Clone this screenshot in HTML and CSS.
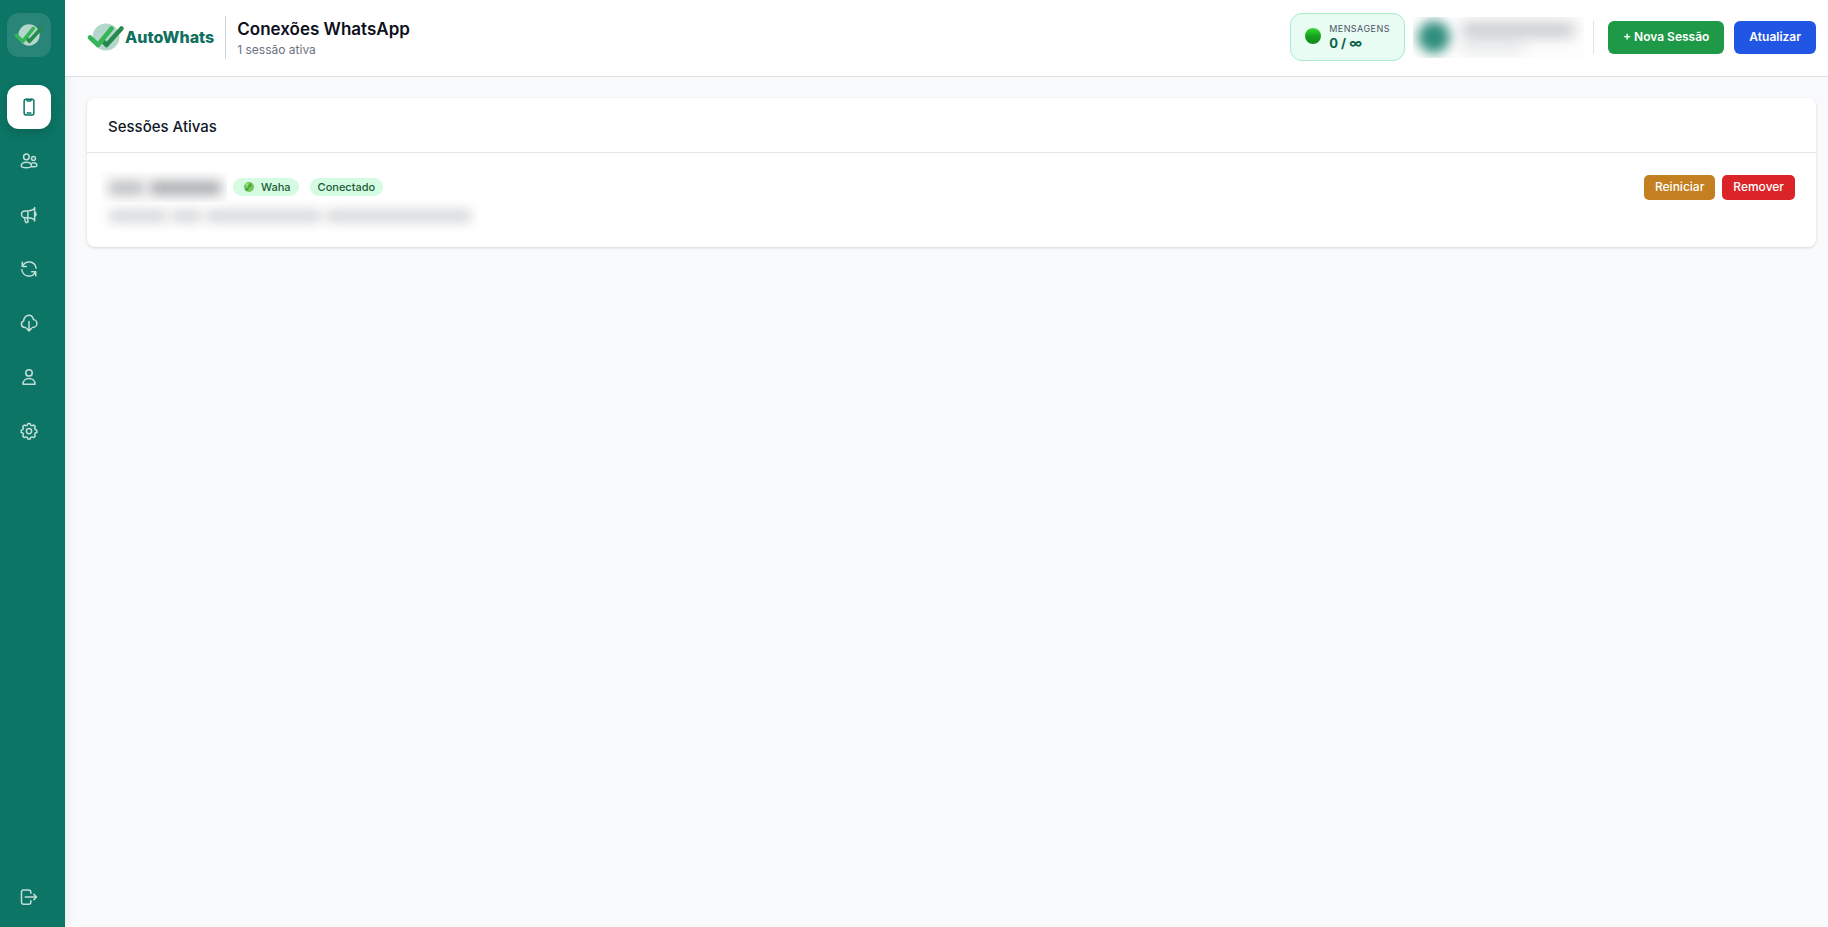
FILE: index.html
```html
<!doctype html>
<html lang="pt-BR">
<head>
    <meta charset="UTF-8">
    <title>AutoWhats</title>
    <link rel="stylesheet" href="styles.css">
</head>
<body>
    <svg class="defs" aria-hidden="true">
        <symbol id="logo" viewBox="0 0 38 30">
            <circle cx="19" cy="15" r="13.500" fill="#b4d6cb"/>
            <path d="M16 19l3.500 4L34.500 6.500" stroke="#268a4e"/>
            <path d="M3 15.500l8 7.500L24.500 6.500" stroke="#35b558"/>
        </symbol>
    </svg>

    <aside class="sidebar">
        <a class="brand" href="#" aria-label="AutoWhats">
            <svg class="logo-mark small"><use href="#logo"/></svg>
        </a>
        <nav class="nav">
            <a class="nav-item active" href="#" aria-label="Conexões">
                <svg viewBox="0 0 24 24"><rect x="5.500" y="1.500" width="13" height="21" rx="2.500"/><path d="M9 1.500c0 2 .5 2.500 1.500 2.500h3c1 0 1.500-.5 1.500-2.500M9.500 20h5"/></svg>
            </a>
            <a class="nav-item" href="#" aria-label="Contatos">
                <svg viewBox="0 0 24 24"><circle cx="8.500" cy="6.500" r="3.700"/><circle cx="18" cy="8.500" r="2.600"/><path d="M8.500 13.500c-4 0-6.800 2.200-6.800 5.200 0 1.500 3.300 2.300 6.800 2.300s6.800-.8 6.800-2.300c0-3-2.800-5.200-6.800-5.200zM15.500 15c.8-.6 1.700-.8 2.700-.8 2.600 0 4.300 1.700 4.300 3.800 0 1.300-3.500 2.200-6.800 1.500"/></svg>
            </a>
            <a class="nav-item" href="#" aria-label="Campanhas">
                <svg viewBox="0 0 24 24"><path d="M10.500 15.500H6.500a4.500 4.500 0 010-9h4c3.500 0 6.500-1 9-3v15c-2.500-2-5.500-3-9-3zM10.500 6.500v9M19.500 3.500V2M19.500 18.500V20M19.500 8c2.500.5 2.500 5.500 0 6M6 15.500c.3 2.200.8 4 1.500 5.800.8 1.200 3.700.8 3.300-1-.5-1.500-.8-3-.8-4.800"/></svg>
            </a>
            <a class="nav-item" href="#" aria-label="Sincronizar">
                <svg viewBox="0 0 24 24"><path d="M3 3v5.500h5.500M3.500 8A9.500 9.500 0 0121.500 11M21 21v-5.500h-5.500M20.500 16A9.500 9.500 0 012.500 13"/></svg>
            </a>
            <a class="nav-item" href="#" aria-label="Importar">
                <svg viewBox="0 0 24 24"><path d="M7.500 18H6.200A4.500 4.500 0 014.800 9.300C5 5.200 8 1.500 11.700 1.500c3.200 0 5.700 2.500 6.300 6 2.500.3 4.500 2.400 4.500 5.100 0 3-2.300 5.400-5.300 5.400H16.500M12 10v12M9 19.500l3 3 3-3"/></svg>
            </a>
            <a class="nav-item" href="#" aria-label="Perfil">
                <svg viewBox="0 0 24 24"><circle cx="12" cy="6.500" r="4.300"/><path d="M4 21.500c0-4.500 3.500-7.500 8-7.500s8 3 8 7.500z"/></svg>
            </a>
            <a class="nav-item" href="#" aria-label="Configurações">
                <svg viewBox="0 0 24 24"><circle cx="12" cy="12" r="3.500"/><path d="M9.800 4.200L10.500 2h3l.7 2.200 2 .8 2.100-1 2.100 2.100-1 2.100.8 2 2.200.7v3l-2.200.7-.8 2 1 2.100-2.100 2.100-2.100-1-2 .8-.7 2.200h-3l-.7-2.200-2-.8-2.100 1-2.100-2.100 1-2.100-.8-2-2.200-.7v-3l2.200-.7.8-2-1-2.100L5.700 4l2.100 1z"/></svg>
            </a>
        </nav>
        <button class="nav-item logout" type="button" aria-label="Sair">
            <svg viewBox="0 0 24 24"><path d="M14.500 7V5.500A3 3 0 0011.500 2.500H5A3 3 0 002 5.500v13a3 3 0 003 3h6.500a3 3 0 003-3v-1.500M7 12h15M18.500 8.500l3.500 3.500-3.500 3.500"/></svg>
        </button>
    </aside>

    <div class="page">
        <header class="topbar">
            <a class="logo" href="#">
                <svg class="logo-mark"><use href="#logo"/></svg>
                <span>AutoWhats</span>
            </a>
            <div class="heading">
                <h1>Conexões WhatsApp</h1>
                <p>1 sessão ativa</p>
            </div>
            <div class="quota">
                <span class="dot"></span>
                <div>
                    <div class="quota-label">MENSAGENS</div>
                    <div class="quota-value">0 / ∞</div>
                </div>
            </div>
            <div class="user">
                <span class="avatar"></span>
                <div class="user-lines">
                    <span class="user-name"></span>
                    <span class="user-role"></span>
                </div>
            </div>
            <div class="actions">
                <button class="btn green" type="button">+ Nova Sessão</button>
                <button class="btn blue" type="button">Atualizar</button>
            </div>
        </header>

        <main class="content">
            <section class="card">
                <h2>Sessões Ativas</h2>
                <div class="session">
                    <div>
                        <div class="session-head">
                            <span class="session-name"><i></i><i></i></span>
                            <span class="badge waha">
                                <svg viewBox="0 0 10 10"><circle cx="5" cy="5" r="5" fill="#72c957"/><path d="M1 8c1-3 3-1 3-3s2-3 4-4c-1 3 0 4-2 4S5 9 3 9z" fill="#4aa046"/><circle cx="3" cy="2.500" r="1.300" fill="#a4e183"/></svg>
                                Waha
                            </span>
                            <span class="badge">Conectado</span>
                        </div>
                        <div class="session-info"><i></i><i></i><i></i><i></i></div>
                    </div>
                    <div class="session-actions">
                        <button class="btn small amber" type="button">Reiniciar</button>
                        <button class="btn small red" type="button">Remover</button>
                    </div>
                </div>
            </section>
        </main>
    </div>
</body>
</html>
```
FILE: styles.css
```css
* {
    box-sizing: border-box;
}

body {
    display: flex;
    min-height: 100vh;
    margin: 0;
    font-family: Inter, "Liberation Sans", sans-serif;
    color: #111827;
    background-color: #f8fafc;
}

h1, h2, p {
    margin: 0;
}

a {
    text-decoration: none;
}

button {
    border: none;
    font-family: inherit;
    cursor: pointer;
}

.defs {
    position: absolute;
    width: 0;
    height: 0;
}

/* sidebar */
.sidebar {
    display: flex;
    flex-direction: column;
    width: 65px;
    padding: 13px 14px 8px 7px;
    background-color: #0c7565;
    box-shadow: 2px 0 10px rgba(0, 0, 0, 0.08);
}

.brand, .nav-item {
    display: flex;
    align-items: center;
    justify-content: center;
    width: 44px;
    height: 44px;
    border-radius: 12px;
}

.brand {
    margin-bottom: 28px;
    background-color: rgba(255, 255, 255, 0.12);
}

.nav {
    display: flex;
    flex-direction: column;
    gap: 10px;
}

.nav-item {
    padding: 0;
    background: none;
    color: #c3ddd8;
}

.nav-item.active {
    background-color: #fff;
    color: #0c7565;
    box-shadow: 0 4px 10px rgba(0, 0, 0, 0.15);
}

.nav-item svg {
    width: 18px;
    height: 18px;
    fill: none;
    stroke: currentColor;
    stroke-width: 2;
    stroke-linecap: round;
    stroke-linejoin: round;
}

.logout {
    margin-top: auto;
}

.logo-mark {
    width: 38px;
    height: 30px;
    fill: none;
    stroke-width: 4.5;
    stroke-linecap: round;
    stroke-linejoin: round;
}

.logo-mark.small {
    width: 30px;
    height: 24px;
}

/* header */
.page {
    flex: 1;
    min-width: 0;
}

.topbar {
    display: flex;
    align-items: center;
    height: 77px;
    padding: 0 12px 2px 22px;
    background-color: #fff;
    border-bottom: 1px solid #dfe3e6;
}

.logo {
    display: flex;
    align-items: center;
    color: #10705f;
    font-size: 16px;
    font-weight: 800;
}

.heading {
    display: flex;
    flex-direction: column;
    justify-content: center;
    height: 43px;
    margin-left: 11px;
    padding: 2px 0 0 11px;
    border-left: 1px solid #d1d5db;
}

.heading h1 {
    color: #0d111c;
    font-size: 17px;
    font-weight: 600;
    line-height: 24px;
}

.heading p {
    color: #6b7280;
    font-size: 12px;
    line-height: 18px;
}

.quota {
    display: flex;
    align-items: center;
    gap: 8px;
    height: 48px;
    margin-left: auto;
    padding: 0 14px 2px;
    border: 1px solid #a7ecc9;
    border-radius: 12px;
    background-color: #e8fcf3;
}

.dot {
    width: 16px;
    height: 16px;
    border-radius: 50%;
    background: linear-gradient(#3cdb3a, #16a01d 50%, #138a1a);
}

.quota-label {
    color: #4b5563;
    font-size: 9px;
    line-height: 13px;
    letter-spacing: 0.05em;
}

.quota-value {
    color: #0b6148;
    font-size: 13px;
    font-weight: 700;
    line-height: 16px;
}

.user {
    display: flex;
    align-items: center;
    gap: 12px;
    width: 171px;
    height: 41px;
    margin-left: 8px;
    padding-left: 5px;
    overflow: hidden;
    background-color: #fdfdfd;
}

.avatar {
    width: 32px;
    height: 32px;
    border-radius: 50%;
    background-color: #2f8d7c;
    filter: blur(6px);
}

.user-lines {
    display: grid;
    gap: 6px;
    filter: blur(7px);
}

.user-name {
    width: 112px;
    height: 14px;
    background-color: #c5c7ca;
}

.user-role {
    width: 62px;
    height: 8px;
    background-color: #dfe1e3;
}

.actions {
    display: flex;
    gap: 10px;
    margin-left: 9px;
    padding-left: 14px;
    border-left: 1px solid #e0e3e7;
}

.btn {
    height: 33px;
    padding: 0 15px 2px;
    border-radius: 6px;
    color: #fff;
    font-size: 12px;
    font-weight: 600;
}

.btn.small {
    height: 25px;
    padding: 0 11px 2px;
    border-radius: 5px;
    font-weight: 500;
}

.green {
    background-color: #1d9947;
}

.blue {
    background-color: #2156e5;
}

.amber {
    background-color: #c37f20;
}

.red {
    background-color: #db2427;
}

/* sessions */
.content {
    padding: 21px 12px 21px 22px;
}

.card {
    border-radius: 8px;
    background-color: #fff;
    box-shadow: 0 1px 3px rgba(0, 0, 0, 0.15);
}

.card h2 {
    padding: 17px 21px 14px;
    border-bottom: 1px solid #e2e5e9;
    font-size: 15px;
    font-weight: 500;
    line-height: 23px;
}

.session {
    display: flex;
    justify-content: space-between;
    padding: 19px 21px 16px 14px;
}

.session-head {
    display: flex;
    align-items: center;
    height: 30px;
}

.session-name {
    display: flex;
    align-items: center;
    gap: 6px;
    width: 126px;
    height: 30px;
    margin-right: 6px;
    padding: 2px 6px 0 8px;
    overflow: hidden;
    background-color: #fdfdfd;
}

.session-name i {
    flex: 1;
    height: 14px;
    background-color: #bcbec0;
    filter: blur(6px);
}

.session-name i + i {
    flex: 2;
    background-color: #a9abae;
}

.badge {
    display: flex;
    align-items: center;
    gap: 7px;
    height: 18px;
    margin-right: 11px;
    padding: 0 8px;
    border-radius: 9px;
    background-color: #d5fbe2;
    color: #1b5c38;
    font-size: 11px;
    font-weight: 500;
}

.badge.waha {
    padding-left: 11px;
}

.badge svg {
    width: 10px;
    height: 10px;
}

.session-info {
    display: flex;
    align-items: center;
    gap: 5px;
    width: 374px;
    height: 29px;
    padding: 0 4px 2px 8px;
}

.session-info i {
    flex: 2;
    height: 12px;
    background-color: #d3d5d7;
    filter: blur(6px);
}

.session-info i:nth-child(2) {
    flex: 1;
}

.session-info i:nth-child(3) {
    flex: 4;
}

.session-info i:nth-child(4) {
    flex: 5;
}

.session-actions {
    display: flex;
    gap: 7px;
    padding-top: 3px;
}
```
